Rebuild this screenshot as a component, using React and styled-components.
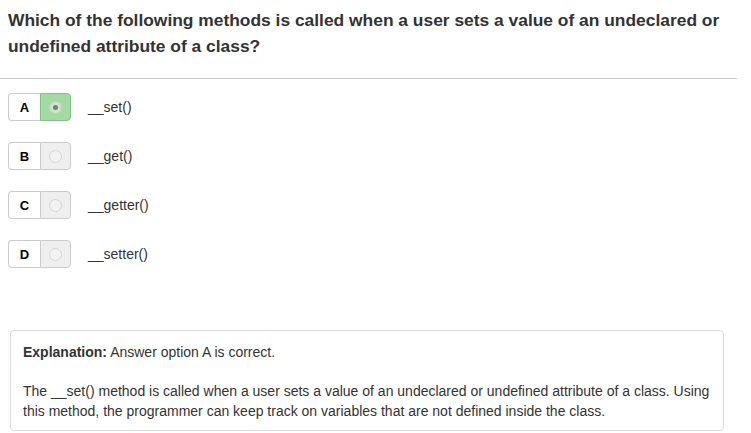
import React from "react"
import styled, { createGlobalStyle } from "styled-components"

const GlobalStyle = createGlobalStyle`
  body {
    margin: 0;
    background: #fff;
    font-family: "Liberation Sans", Arial, sans-serif;
    color: #333;
  }
`

const Page = styled.div`
  width: 737px;
  padding-top: 7px;
`

const Question = styled.h2`
  margin: 0 0 0 8px;
  font-size: 17.4px;
  line-height: 26px;
  font-weight: 700;
  color: #333;
`

const Divider = styled.div`
  margin-top: 19px;
  border-top: 1px solid #ccc;
`

const Options = styled.div`
  display: flex;
  flex-direction: column;
  gap: 21px;
  padding: 14px 0 0 8px;
`

const Row = styled.div`
  display: flex;
  align-items: center;
`

const Choice = styled.div`
  display: flex;
  height: 28px;
`

const Letter = styled.span`
  width: 32px;
  box-sizing: border-box;
  display: flex;
  align-items: center;
  justify-content: center;
  font-size: 13px;
  font-weight: 700;
  color: #000;
  background: #fff;
  border: 1px solid #ccc;
  border-right: none;
  border-radius: 4px 0 0 4px;
`

const RadioCell = styled.span`
  width: 31px;
  box-sizing: border-box;
  display: flex;
  align-items: center;
  justify-content: center;
  border: 1px solid ${props => (props.$selected ? "#7fc37f" : "#ccc")};
  border-radius: 0 4px 4px 0;
  background: ${props => (props.$selected ? "#a5d9a3" : "#eee")};
`

const Radio = styled.span`
  width: 11px;
  height: 11px;
  border-radius: 50%;
  border: 1px solid ${props => (props.$selected ? "#b8d8b6" : "#d4d4d4")};
  background: ${props => (props.$selected ? "#c9e5c7" : "#f2f2f2")};
  display: flex;
  align-items: center;
  justify-content: center;

  &::after {
    content: "";
    width: 5px;
    height: 5px;
    border-radius: 50%;
    background: ${props => (props.$selected ? "#7a7a7a" : "transparent")};
  }
`

const Label = styled.span`
  margin-left: 17px;
  font-size: 14px;
  color: #333;
`

const Explanation = styled.div`
  margin: 62px 0 0 10px;
  width: 714px;
  box-sizing: border-box;
  border: 1px solid #ddd;
  border-radius: 4px;
  padding: 11px 12px 9px 12px;
  font-size: 14px;
  line-height: 20px;
  color: #333;
`

const Lead = styled.p`
  margin: 0 0 19px 0;
`

const Body = styled.p`
  margin: 0;
`

const options = [
  { key: "A", text: "__set()", selected: true },
  { key: "B", text: "__get()" },
  { key: "C", text: "__getter()" },
  { key: "D", text: "__setter()" },
]

export default function App() {
  return (
    <Page>
      <GlobalStyle />
      <Question>
        Which of the following methods is called when a user sets a value of an undeclared or
        undefined attribute of a class?
      </Question>
      <Divider />
      <Options>
        {options.map(o => (
          <Row key={o.key}>
            <Choice>
              <Letter>{o.key}</Letter>
              <RadioCell $selected={o.selected}>
                <Radio $selected={o.selected} />
              </RadioCell>
            </Choice>
            <Label>{o.text}</Label>
          </Row>
        ))}
      </Options>
      <Explanation>
        <Lead>
          <b>Explanation:</b> Answer option A is correct.
        </Lead>
        <Body>
          The __set() method is called when a user sets a value of an undeclared or undefined
          attribute of a class. Using this method, the programmer can keep track on variables that
          are not defined inside the class.
        </Body>
      </Explanation>
    </Page>
  )
}
